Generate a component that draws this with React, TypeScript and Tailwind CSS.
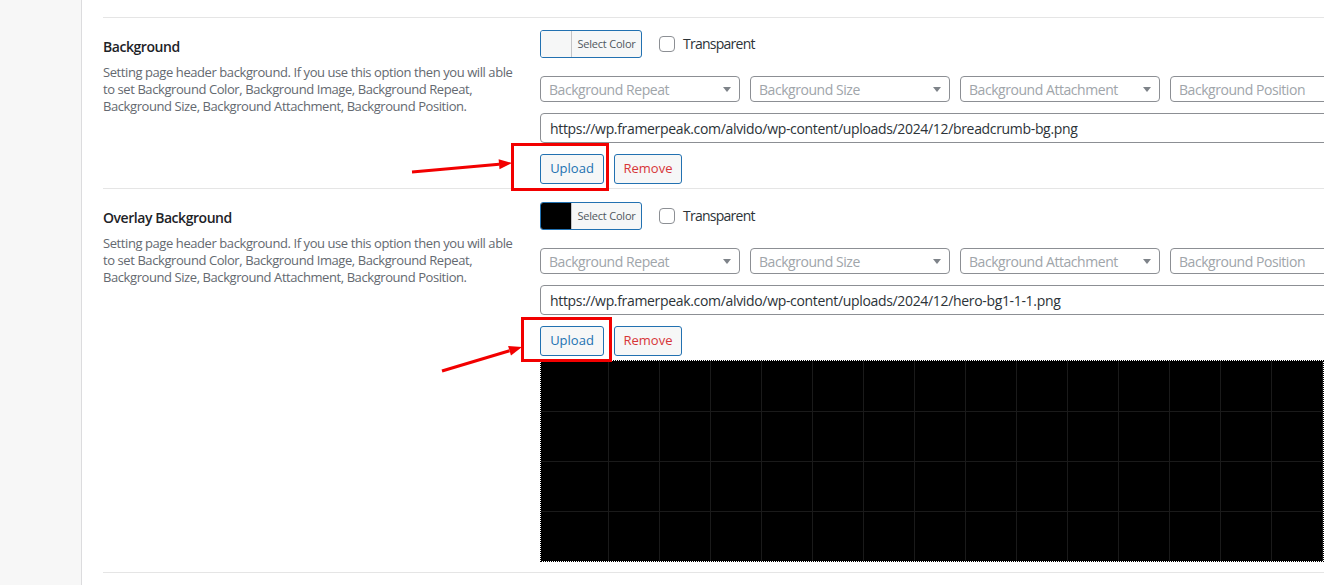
import { ReactNode } from 'react';

const font = "font-['Open_Sans','Noto_Sans',sans-serif]";

const selectLabels = ['Background Repeat', 'Background Size', 'Background Attachment', 'Background Position'];

function Caret() {
  return (
    <svg width="8" height="5" viewBox="0 0 8 5" className="shrink-0">
      <path d="M0 0 H8 L4 5 Z" fill="#7e8389" />
    </svg>
  );
}

function ColorPicker({ swatch }: { swatch: string }) {
  return (
    <div className="flex h-[28px] items-center gap-[17px]">
      <button className="flex h-[28px] w-[102px] overflow-hidden rounded-[3px] border border-[#2271b1] bg-[#f6f7f7]">
        <span className={`h-full w-[31px] border-r border-[#c3c4c7] ${swatch}`} />
        <span className="flex-1 text-center text-[11px] leading-[26px] tracking-[-0.2px] text-[#50575e]">Select Color</span>
      </button>
      <label className="flex items-center gap-[8px]">
        <span className="h-[16px] w-[16px] rounded-[4px] border border-[#8c8f94] bg-white" />
        <span className="text-[14px] leading-[20px] tracking-[-0.75px] text-[#2c3338]">Transparent</span>
      </label>
    </div>
  );
}

function SelectRow() {
  return (
    <div className="mt-[18px] flex gap-[10px]">
      {selectLabels.map((label, i) => (
        <div
          key={label}
          className="flex h-[26px] w-[200px] shrink-0 items-center justify-between rounded-[4px] border border-[#8c8f94] bg-white pl-[8px] pr-[8px]"
        >
          <span className="text-[14px] tracking-[-0.45px] text-[#a0a5aa]">{label}</span>
          {i < 3 && <Caret />}
        </div>
      ))}
    </div>
  );
}

function UrlField({ url }: { url: string }) {
  return (
    <div className="mt-[11px] flex h-[30px] w-[800px] items-center rounded-l-[4px] border border-[#8c8f94] bg-white pl-[9px]">
      <span className="text-[14px] tracking-[-0.33px] text-[#2c3338]">{url}</span>
    </div>
  );
}

function Buttons() {
  return (
    <div className="mt-[11px] flex h-[30px] gap-[10px]">
      <button className="h-[30px] w-[64px] rounded-[3px] border border-[#2271b1] bg-[#f6f7f7] text-[13px] text-[#2271b1]">
        Upload
      </button>
      <button className="h-[30px] w-[68px] rounded-[3px] border border-[#2271b1] bg-[#f6f7f7] text-[13px] text-[#d63638]">
        Remove
      </button>
    </div>
  );
}

function Section({ title, children, top, bottom }: { title: string; children: ReactNode; top: string; bottom: string }) {
  return (
    <section className="grid grid-cols-[437px_1fr] border-b border-[#e5e5e5]">
      <div className="pr-[24px] pt-[19px]">
        <h3 className="text-[14px] font-semibold leading-[20px] tracking-[-0.45px] text-[#1d2327]">{title}</h3>
        <p className="mt-[7px] text-[13px] leading-[17px] tracking-[-0.42px] text-[#646970]">
          Setting page header background. If you use this option then you will able to set Background Color,
          Background Image, Background Repeat, Background Size, Background Attachment, Background Position.
        </p>
      </div>
      <div className={`${top} ${bottom}`}>{children}</div>
    </section>
  );
}

// preview of the uploaded overlay image: black tile with a faint grid
function OverlayPreview() {
  const cols = Array.from({ length: 15 }, (_, i) => 68 + i * 51);
  const rows = [50, 100, 150];
  return (
    <div className="mt-[4px] h-[202px] w-[784px] border border-dotted border-black bg-black bg-clip-padding">
      <svg width="782" height="200" className="block">
        {cols.map((x) => (
          <line key={x} x1={x - 0.5} y1="0" x2={x - 0.5} y2="200" stroke="#1a1a1a" strokeWidth="1" />
        ))}
        {rows.map((y) => (
          <line key={y} x1="0" y1={y + 0.5} x2="782" y2={y + 0.5} stroke="#1a1a1a" strokeWidth="1" />
        ))}
      </svg>
    </div>
  );
}

function Arrow({ x1, y1, x2, y2 }: { x1: number; y1: number; x2: number; y2: number }) {
  const a = Math.atan2(y2 - y1, x2 - x1);
  const len = 13;
  const w = 5;
  const bx = x2 - len * Math.cos(a);
  const by = y2 - len * Math.sin(a);
  const p1 = `${bx + w * Math.sin(a)},${by - w * Math.cos(a)}`;
  const p2 = `${bx - w * Math.sin(a)},${by + w * Math.cos(a)}`;
  return (
    <g>
      <line x1={x1} y1={y1} x2={bx} y2={by} stroke="#f20000" strokeWidth="3" />
      <polygon points={`${x2},${y2} ${p1} ${p2}`} fill="#f20000" />
    </g>
  );
}

export default function App() {
  return (
    <div className={`relative flex h-[585px] w-[1324px] overflow-hidden bg-white ${font}`}>
      <aside className="w-[82px] shrink-0 border-r border-[#dcdcde] bg-[#f7f7f7]" />
      <main className="min-w-0 flex-1 pl-[21px]">
        <div className="h-[18px] border-b border-[#e5e5e5]" />
        <Section title="Background" top="pt-[12px]" bottom="pb-[4px]">
          <ColorPicker swatch="bg-[#f6f7f7]" />
          <SelectRow />
          <UrlField url="https://wp.framerpeak.com/alvido/wp-content/uploads/2024/12/breadcrumb-bg.png" />
          <Buttons />
        </Section>
        <Section title="Overlay Background" top="pt-[13px]" bottom="pb-[10px]">
          <ColorPicker swatch="bg-black" />
          <SelectRow />
          <UrlField url="https://wp.framerpeak.com/alvido/wp-content/uploads/2024/12/hero-bg1-1-1.png" />
          <Buttons />
          <OverlayPreview />
        </Section>
      </main>

      {/* red callouts around the upload buttons */}
      <div className="absolute left-[511px] top-[143px] h-[48px] w-[98px] border-[3px] border-[#f20000]" />
      <div className="absolute left-[521px] top-[317px] h-[45px] w-[91px] border-[3px] border-[#f20000]" />
      <svg className="pointer-events-none absolute left-0 top-0" width="1324" height="585">
        <Arrow x1={412} y1={172} x2={512} y2={163} />
        <Arrow x1={442} y1={371} x2={522} y2={347} />
      </svg>
    </div>
  );
}
